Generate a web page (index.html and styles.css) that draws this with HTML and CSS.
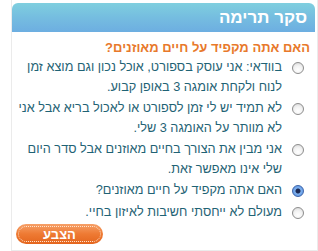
FILE: index.html
```html
<!DOCTYPE html>
<html lang="he" dir="rtl">
<head>
<meta charset="utf-8">
<link rel="stylesheet" href="styles.css">
</head>
<body>
<div class="panel">
  <div class="header">סקר תרימה</div>
  <div class="question">האם אתה מקפיד על חיים מאוזנים?</div>
  <ul class="options">
    <li class="option"><span class="radio"></span><span class="label">בוודאי: אני עוסק בספורט, אוכל נכון וגם מוצא זמן לנוח ולקחת אומגה 3 באופן קבוע.</span></li>
    <li class="option"><span class="radio"></span><span class="label">לא תמיד יש לי זמן לספורט או לאכול בריא אבל אני לא מוותר על האומגה 3 שלי.</span></li>
    <li class="option"><span class="radio"></span><span class="label">אני מבין את הצורך בחיים מאוזנים אבל סדר היום שלי אינו מאפשר זאת.</span></li>
    <li class="option"><span class="radio checked"></span><span class="label">האם אתה מקפיד על חיים מאוזנים?</span></li>
    <li class="option"><span class="radio"></span><span class="label">מעולם לא ייחסתי חשיבות לאיזון בחיי.</span></li>
  </ul>
  <div class="actions"><button class="vote">הצבע</button></div>
</div>
</body>
</html>
```

FILE: styles.css
```css
html, body {
  margin: 0;
  padding: 0;
  background: #ffffff;
}
body {
  font-family: "Liberation Sans", Arial, sans-serif;
}
.panel {
  width: 303px;
  margin-left: 4px;
  border: 1px solid #ebebeb;
  border-top: none;
  padding: 3px 2px 6px 0;
  box-sizing: content-box;
}
.header {
  height: 29px;
  line-height: 30px;
  border-radius: 6px 6px 0 0;
  background: linear-gradient(to bottom, #7fcfdf 0%, #75bde0 50%, #6daee1 100%);
  color: #ffffff;
  font-size: 17px;
  font-weight: bold;
  padding-right: 8px;
}
.question {
  color: #e8792b;
  font-size: 13px;
  font-weight: bold;
  padding: 6px 5px 0 0;
  height: 20px;
  line-height: 20px;
}
.options {
  list-style: none;
  margin: 0;
  padding: 0 11px 0 5px;
}
.option {
  display: flex;
  align-items: flex-start;
  gap: 10px;
  margin-bottom: 2px;
}
.radio {
  flex: none;
  width: 10px;
  height: 10px;
  margin-top: 4px;
  border-radius: 50%;
  border: 1px solid #8d8d8d;
  background: radial-gradient(circle at 50% 70%, #ffffff 0%, #f2f2f2 50%, #d2d2d2 100%);
}
.radio.checked {
  border-color: #3c63a8;
  background: radial-gradient(circle at 50% 50%, #1b2a55 0, #1b2a55 2px, #7fb1ee 3px, #4f8ae0 100%);
}
.label {
  color: #1f6375;
  font-size: 12.7px;
  line-height: 19.5px;
}
.actions {
  display: flex;
  justify-content: flex-end;
  padding: 0 0 0 4px;
}
.vote {
  width: 87px;
  height: 20px;
  border: none;
  border-radius: 10px;
  background: linear-gradient(to bottom, #f6a068 0%, #ee7a33 50%, #e4651d 100%);
  color: #ffffff;
  font-family: "Liberation Sans", Arial, sans-serif;
  font-size: 13px;
  font-weight: bold;
  padding: 0;
  position: relative;
  outline: none;
}
.vote::after {
  content: "";
  position: absolute;
  inset: 2px;
  border: 1px dotted #ffe2cc;
  border-radius: 8px;
}
```
